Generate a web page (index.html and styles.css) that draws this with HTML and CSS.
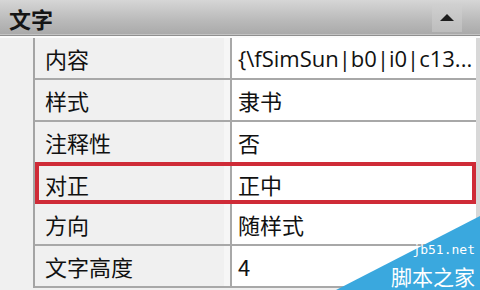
FILE: index.html
```html
<!DOCTYPE html>
<html lang="zh-CN">
  <head>
    <meta charset="UTF-8" />
    <title>特性 - 文字</title>
    <link rel="stylesheet" href="styles.css">
  </head>
  <body>
    <!-- 分组标题 -->
    <div class="group-bar">
      <span class="group-title">文字</span>
      <span class="collapse-btn"><span class="arrow-up"></span></span>
    </div>

    <!-- 属性表 -->
    <div class="props">
      <div class="gutter"></div>
      <div class="rows">
        <div class="row">
          <div class="cell name">内容</div>
          <div class="cell value latin">{\fSimSun|b0|i0|c13...</div>
        </div>
        <div class="row">
          <div class="cell name">样式</div>
          <div class="cell value">隶书</div>
        </div>
        <div class="row">
          <div class="cell name">注释性</div>
          <div class="cell value">否</div>
        </div>
        <div class="row selected">
          <div class="cell name">对正</div>
          <div class="cell value">正中</div>
        </div>
        <div class="row">
          <div class="cell name">方向</div>
          <div class="cell value">随样式</div>
        </div>
        <div class="row">
          <div class="cell name">文字高度</div>
          <div class="cell value">4</div>
        </div>
      </div>
    </div>

    <!-- 水印 -->
    <div class="watermark">
      <svg class="wm-bg" width="144" height="74" viewBox="0 0 144 74">
        <polygon points="0,74 144,0 144,74" fill="#3aa8de" />
      </svg>
      <span class="wm-url">jb51.net</span>
      <span class="wm-name">脚本之家</span>
    </div>
  </body>
</html>
```

FILE: styles.css
```css
body {
  margin: 0;
  width: 480px;
  height: 290px;
  overflow: hidden;
  position: relative;
  background: #f0f0f0;
  font-family: "Noto Sans CJK SC", "Noto Sans", sans-serif;
  color: #111;
}

.group-bar {
  height: 35px;
  display: flex;
  align-items: center;
  justify-content: space-between;
  padding: 0 18px 0 9px;
  background: linear-gradient(#d6d6d6, #b9b9b9 60%, #a9a9a9);
  border-bottom: 1px solid #8f8f8f;
  box-shadow: inset 0 -1px 0 #c4c4c4;
}

.group-title {
  font-size: 22px;
  font-weight: bold;
  color: #151515;
  line-height: 1;
}

.collapse-btn {
  width: 30px;
  height: 28px;
  display: flex;
  align-items: center;
  justify-content: center;
  background: linear-gradient(#d0d0d0, #bdbdbd);
}

.arrow-up {
  width: 0;
  height: 0;
  border-left: 7px solid transparent;
  border-right: 7px solid transparent;
  border-bottom: 7px solid #1d1d1d;
}

.props {
  display: flex;
  border-top: 2px solid #fbfbfb;
}

.gutter {
  width: 33px;
  background: #f0f0f0;
  border-right: 2px solid #a4a4a4;
}

.rows {
  width: 441px;
  border-right: 4px solid #d8d8d8;
}

.row {
  display: flex;
  height: 40px;
  border-bottom: 2px solid #a8a8a8;
}

.cell {
  display: flex;
  align-items: center;
  font-size: 22px;
  line-height: 1;
  white-space: nowrap;
}

.name {
  width: 185px;
  padding-left: 10px;
  background: #f0f0f0;
  border-right: 2px solid #a8a8a8;
  box-shadow: inset -6px 0 0 #f6f6f6;
}

.value {
  flex: 1;
  padding-left: 6px;
  background: #fff;
  overflow: hidden;
}

.latin {
  font-family: "Open Sans", "Noto Sans", sans-serif;
  font-size: 22px;
  letter-spacing: 0;
}

.row.selected {
  height: 42px;
  margin-top: -2px;
  border-bottom: none;
  outline: 4px solid #cf2b37;
  outline-offset: -4px;
}

.row.selected .cell {
  padding-top: 2px;
}

.watermark {
  position: absolute;
  right: 0;
  bottom: 0;
  width: 144px;
  height: 74px;
}

.wm-bg {
  display: block;
}

.wm-url {
  position: absolute;
  right: 5px;
  top: 27px;
  font-family: "DejaVu Sans Mono", monospace;
  font-size: 13px;
  line-height: 1;
  color: #fff;
}

.wm-name {
  position: absolute;
  right: 5px;
  bottom: 3px;
  font-size: 21px;
  line-height: 1;
  color: #fff;
}
```
